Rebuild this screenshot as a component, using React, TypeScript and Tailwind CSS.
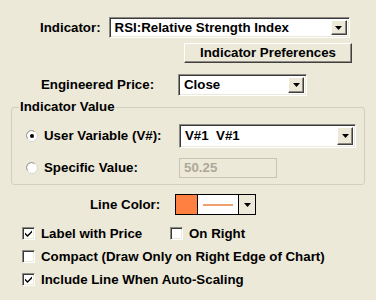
import React from "react";

const sunken =
  "border border-t-[#8c8a82] border-l-[#8c8a82] border-r-white border-b-white shadow-[inset_1px_1px_0_#3a3a3a,inset_-1px_-1px_0_#ece9d8]";
const raised =
  "border border-t-white border-l-white border-r-[#404040] border-b-[#404040] shadow-[inset_-1px_-1px_0_#8c8a82,inset_1px_1px_0_#ece9d8]";

function Arrow() {
  return (
    <div className={`flex items-center justify-center bg-[#ece9d8] ${raised} w-[16px] h-full`}>
      <svg width="7" height="4" viewBox="0 0 7 4">
        <path d="M0 0h7L3.5 4z" fill="#000" />
      </svg>
    </div>
  );
}

function Combo({ value, w, h }: { value: string; w: string; h: string }) {
  return (
    <div className={`flex items-stretch bg-white ${sunken} ${w} ${h} p-[2px]`}>
      <div className="flex-1 flex items-center pl-[3px] leading-none whitespace-pre">{value}</div>
      <Arrow />
    </div>
  );
}

function Radio({ on }: { on?: boolean }) {
  return (
    <svg width="12" height="12" viewBox="0 0 12 12" className="shrink-0">
      <circle cx="6" cy="6" r="5.5" fill="#fff" stroke="#d8d6cc" />
      <path d="M1.5 8.5A5 5 0 0 1 8.5 1.5" stroke="#9c9a92" fill="none" />
      {on && <circle cx="6" cy="6" r="2" fill="#000" />}
    </svg>
  );
}

function Check({ on }: { on?: boolean }) {
  return (
    <div className={`w-[13px] h-[13px] bg-white shrink-0 ${sunken} flex items-center justify-center`}>
      {on && (
        <svg width="7" height="7" viewBox="0 0 7 7">
          <path d="M0 2.5l2.5 2.5L7 0.5v2L2.5 7 0 4.5z" fill="#000" />
        </svg>
      )}
    </div>
  );
}

export default function App() {
  return (
    <div className="w-[376px] h-[300px] bg-[#ece9d8] text-black font-bold text-[13.3px] font-['Liberation_Sans',Arial,sans-serif] overflow-hidden">
      <div className="flex items-center pt-[17px]">
        <span className="ml-[40px]">Indicator:</span>
        <div className="ml-[8px]">
          <Combo value="RSI:Relative Strength Index" w="w-[241px]" h="h-[21px]" />
        </div>
      </div>
      <div className="flex mt-[5px]">
        <button className={`ml-[184px] w-[168px] h-[20px] bg-[#ece9d8] ${raised} leading-none`}>
          Indicator Preferences
        </button>
      </div>
      <div className="flex items-center mt-[11px]">
        <span className="ml-[41px] w-[137px]">Engineered Price:</span>
        <Combo value="Close" w="w-[129px]" h="h-[22px]" />
      </div>

      <fieldset className="mx-[11px] mt-[5px] h-[84px] border border-[#d0d0bf] rounded-[3px] px-[6px] pb-0">
        <legend className="px-[1px] ml-[1px] leading-[12px]">Indicator Value</legend>
        <div className="flex items-center mt-[11px]">
          <span className="ml-[8px]"><Radio on /></span>
          <span className="ml-[6px] w-[135px]">User Variable (V#):</span>
          <Combo value="V#1  V#1" w="w-[177px]" h="h-[24px]" />
        </div>
        <div className="flex items-center mt-[10px]">
          <span className="ml-[8px]"><Radio /></span>
          <span className="ml-[6px] w-[135px]">Specific Value:</span>
          <div className="w-[98px] h-[20px] border border-[#c8c5b8] flex items-center pl-[4px] text-[#aca899] leading-none">
            50.25
          </div>
        </div>
      </fieldset>

      <div className="flex items-center mt-[9px]">
        <span className="ml-[90px] w-[85px]">Line Color:</span>
        <div className="flex h-[21px] w-[81px] border border-black">
          <div className="w-[22px] bg-[#ff8040] border-r border-black" />
          <div className="flex-1 bg-white flex items-center justify-center">
            <div className="w-[30px] h-[2px] bg-[#f0a070]" />
          </div>
          <div className="w-[17px] border-l border-black bg-[#ece9d8] flex items-center justify-center">
            <svg width="7" height="4" viewBox="0 0 7 4">
              <path d="M0 0h7L3.5 4z" fill="#000" />
            </svg>
          </div>
        </div>
      </div>

      <div className="flex flex-col gap-[10px] mt-[12px] ml-[22px]">
        <div className="flex items-center h-[13px]">
          <Check on />
          <span className="ml-[6px] w-[129px]">Label with Price</span>
          <Check />
          <span className="ml-[6px]">On Right</span>
        </div>
        <div className="flex items-center h-[13px]">
          <Check />
          <span className="ml-[6px]">Compact (Draw Only on Right Edge of Chart)</span>
        </div>
        <div className="flex items-center h-[13px]">
          <Check on />
          <span className="ml-[6px]">Include Line When Auto-Scaling</span>
        </div>
      </div>
    </div>
  );
}
